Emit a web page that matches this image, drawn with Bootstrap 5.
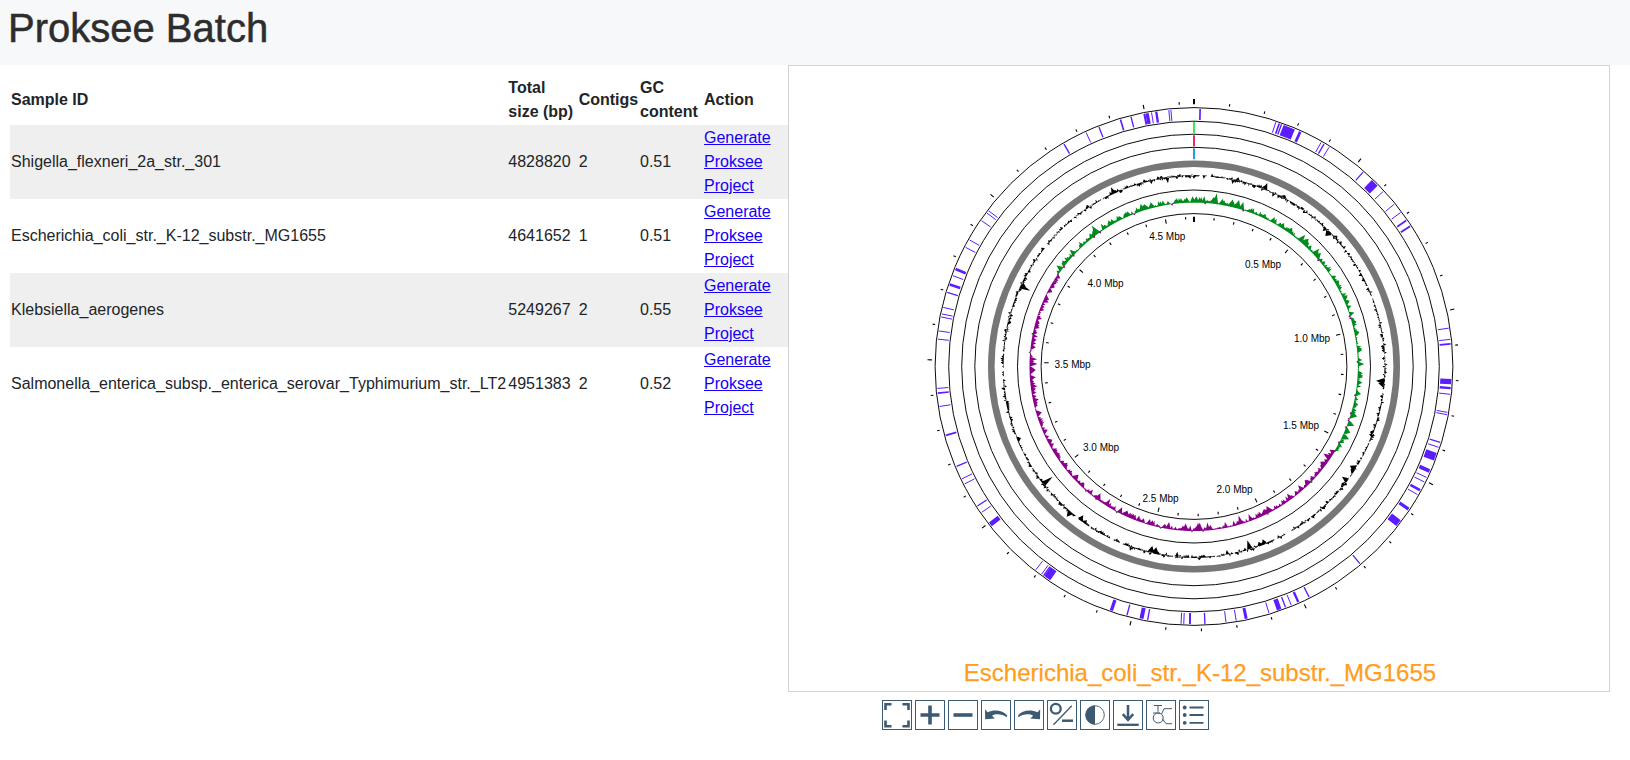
<!DOCTYPE html>
<html lang="en">
<head>
<meta charset="utf-8">
<title>Proksee Batch</title>
<link rel="stylesheet" href="https://cdn.jsdelivr.net/npm/bootstrap@5.3.0/dist/css/bootstrap.min.css">
<style>
body{font-family:"Liberation Sans",Arial,sans-serif;font-size:16px;line-height:1.5;color:#212529;overflow:hidden}
.page-head{height:65px;background:#f7f8fa;padding:4px 8px}
.page-head h1{font-size:40px;font-weight:400;color:#2d2d2d;-webkit-text-stroke:.5px #2d2d2d}
.sample-pane{width:788px;padding:10px 0 0 10px}
.samples{width:778px;table-layout:fixed;border-collapse:collapse}
.samples th,.samples td{padding:1px;vertical-align:middle}
.samples th:first-child,.samples td:first-child{white-space:nowrap}
.samples tbody tr:nth-child(odd){background:#efefef}
.samples a{color:#1400f5}
.map-box{width:822px;height:627px;border:1px solid #d3d3d3}
.tools{gap:3px;padding:8px 0 0 94px}
.tool{width:30px;height:30px;padding:0;border:1px solid #3d5a73;border-radius:0;background:#fff;color:#3d5a73;line-height:0}
.tool svg{display:block;width:28px;height:28px}
</style>
</head>
<body>
<header class="page-head"><h1 class="m-0">Proksee Batch</h1></header>
<main class="d-flex align-items-start">
  <section class="sample-pane flex-shrink-0">
    <table class="samples">
      <colgroup><col style="width:497.3px"><col style="width:70.4px"><col style="width:61.3px"><col style="width:64px"><col></colgroup>
      <thead><tr><th>Sample ID</th><th>Total size (bp)</th><th>Contigs</th><th>GC content</th><th>Action</th></tr></thead>
      <tbody>
        <tr><td>Shigella_flexneri_2a_str._301</td><td>4828820</td><td>2</td><td>0.51</td><td><a href="#">Generate Proksee Project</a></td></tr>
        <tr><td>Escherichia_coli_str._K-12_substr._MG1655</td><td>4641652</td><td>1</td><td>0.51</td><td><a href="#">Generate Proksee Project</a></td></tr>
        <tr><td>Klebsiella_aerogenes</td><td>5249267</td><td>2</td><td>0.55</td><td><a href="#">Generate Proksee Project</a></td></tr>
        <tr><td>Salmonella_enterica_subsp._enterica_serovar_Typhimurium_str._LT2</td><td>4951383</td><td>2</td><td>0.52</td><td><a href="#">Generate Proksee Project</a></td></tr>
      </tbody>
    </table>
  </section>
  <section class="flex-shrink-0">
    <div class="map-box"><svg id="map" class="d-block" width="820" height="625" viewBox="0 0 820 625" font-family="Liberation Sans, Arial, sans-serif"></svg></div>
    <div class="tools d-flex">
      <button class="tool btn" aria-label="Fit"><svg viewBox="0 0 28 28" fill="none" stroke="currentColor" stroke-width="2.6"><path d="M2.500 9V3.300H8.500M19.500 3.300H25.500V9M25.500 19.500V25.200H19.500M8.500 25.200H2.500V19.500"/></svg></button>
      <button class="tool btn" aria-label="Zoom in"><svg viewBox="0 0 28 28" fill="none" stroke="currentColor" stroke-width="3.600"><path d="M4.500 14H23.500M14 4.500V23.500"/></svg></button>
      <button class="tool btn" aria-label="Zoom out"><svg viewBox="0 0 28 28" fill="none" stroke="currentColor" stroke-width="3.600"><path d="M4.500 14H23.500"/></svg></button>
      <button class="tool btn" aria-label="Rotate left"><svg viewBox="0 0 28 28" fill="currentColor"><path d="M3 8.200L5.600 11.200C12 8.300 21 9 25.200 14.500L24.600 16.200C20 13 14 12.500 10 14.700L13 17.500L3.200 18.200Z"/></svg></button>
      <button class="tool btn" aria-label="Rotate right"><svg viewBox="0 0 28 28" fill="currentColor"><path d="M25.200 8.200L22.600 11.200C16 8.300 7 9 3 14.500L3.600 16.200C8 13 14 12.500 18.200 14.700L15.200 17.500L25 18.200Z"/></svg></button>
      <button class="tool btn" aria-label="Circular or linear"><svg viewBox="0 0 28 28" fill="none" stroke="currentColor"><circle cx="7.800" cy="7.700" r="4.900" stroke-width="2.300"/><path d="M5.500 23.800L23.800 4.800" stroke-width="1.300"/><path d="M14 19.700H25" stroke-width="2.500"/></svg></button>
      <button class="tool btn" aria-label="Invert colors"><svg viewBox="0 0 28 28"><circle cx="14" cy="14" r="9.300" fill="none" stroke="currentColor" stroke-width=".9"/><path d="M14 4.500A9.500 9.500 0 0 0 14 23.500Z" fill="currentColor"/></svg></button>
      <button class="tool btn" aria-label="Download"><svg viewBox="0 0 28 28" fill="none" stroke="currentColor"><path d="M14 4V19M8.800 13.200L14 19L19.200 13.200" stroke-width="2.500"/><path d="M3.300 23.800H24.700" stroke-width="2.300"/></svg></button>
      <button class="tool btn" aria-label="Labels"><svg viewBox="0 0 28 28" fill="none" stroke="currentColor" stroke-width="1"><circle cx="11.200" cy="17" r="5"/><path d="M7 4.500H15M11 4.500V10.800M6 12H13M17 7.700H25M17 7.700L14.600 13M15.500 18L19 22.700H25"/></svg></button>
      <button class="tool btn" aria-label="Legend"><svg viewBox="0 0 28 28" stroke="currentColor" fill="currentColor"><g stroke="none"><circle cx="4.700" cy="6.500" r="1.900"/><circle cx="4.700" cy="14" r="1.900"/><circle cx="4.700" cy="21.800" r="1.900"/></g><path d="M9.500 6.500H23.500M9.500 14H23.500M9.500 21.800H23.500" stroke-width="1.800"/></svg></button>
    </div>
  </section>
</main>
<script>
const GENOME = 4641652, CX = 405, CY = 300.5, TAU = Math.PI * 2;
const at = (a, r) => (CX + r * Math.sin(a)).toFixed(2) + ' ' + (CY - r * Math.cos(a)).toFixed(2);
const out = [];
const ring = (r, w, c) => out.push(`<circle cx="${CX}" cy="${CY}" r="${r}" fill="none" stroke="${c}" stroke-width="${w}"/>`);
const radial = (a, r1, r2, w, c) => out.push(`<path d="M${at(a, r1)}L${at(a, r2)}" stroke="${c}" stroke-width="${w}"/>`);

[258.9, 245.300, 232.300, 219.200, 176.500, 152.900].forEach(r => ring(r, 1, '#0c0c0c'));
ring(202.700, 6.600, '#777');

// Scale ticks every 100 kbp, longer every 500 kbp
for (let i = 0; i * 1e5 < GENOME; i++) {
  const a = i * 1e5 / GENOME * TAU, big = i % 5 === 0, w = i ? 1.1 : 2, len = i === 0 ? 5.200 : big ? 4.400 : 2.600;
  radial(a, 262.200, 262.200 + len, w, '#000');
  radial(a, 149.800, 149.800 - len, w, '#000');
}

// Feature midpoints by quadrant: third-pixel offsets from ox, oy, then drawn width
const quadrants = {
  ne: {ox: 12, oy: 829.5}, se: {ox: 12, oy: 19.5}, sw: {ox: 822, oy: 19.5}, nw: {ox: 822, oy: 829.5}
};
const polar = (q, x, y) => {
  const dx = (x - quadrants[q].ox) / 3, dy = (y - quadrants[q].oy) / 3;
  return [(Math.atan2(dx, -dy) + TAU) % TAU, Math.hypot(dx, dy)];
};
const features = {
  ne: [[30,73,5],[252,113,3],[262,117,5],[269,118,4],[292,126,36],[324,140,8],[385,172,3],[394,176,4],[409,185,3],[508,259,4],[542,291,24],[567,316,3],[599,354,3],[619,377,3],[635,401,5],[646,418,6],[759,717,3],[763,750,3],[766,763,5]],
  se: [[765,64,16],[764,83,7],[763,101,3],[755,154,3],[755,161,3],[735,242,4],[731,257,3],[719,284,24],[703,326,11],[694,345,3],[687,358,3],[675,382,8],[669,396,3],[642,438,10],[612,479,22],[499,598,4],[350,697,4],[318,711,7],[297,719,3],[280,725,4],[262,733,14],[232,743,3],[165,759,9],[136,766,3],[106,771,3],[44,774,4],[0,775,5]],
  sw: [[67,84,3],[68,98,5],[74,137,3],[92,222,5],[124,313,4],[141,349,3],[147,365,3],[186,429,4],[198,448,3],[224,483,14],[357,617,3],[374,630,3],[380,634,4],[391,641,22],[579,737,10],[625,750,4],[668,759,12],[686,763,4],[784,774,3],[792,774,3],[810,775,5]],
  nw: [[69,749,3],[72,725,3],[79,684,3],[81,675,3],[86,656,3],[97,612,4],[105,589,8],[112,562,3],[121,543,8],[152,480,3],[165,459,3],[199,402,3],[214,379,3],[220,373,3],[440,176,4],[505,142,3],[543,127,4],[606,104,5],[637,96,4],[676,87,6],[684,85,10],[697,82,3],[711,80,7],[748,76,3],[754,75,3]]
};
for (const q in features) for (const [x, y, w] of features[q])
  radial(polar(q, x, y)[0], 246.600, 257.600, w / 3, '#5b1cff');
radial(0, 233.400, 244.400, 1.8, '#2fe648');
radial(0, 220.300, 231.300, 1.8, '#ee1058');
radial(0, 207.200, 218.200, 1.8, '#1a90cc');

// Filled plots: a small-scale profile plus the named peaks (tip coordinates, base width in degrees)
let seed = 29;
const rnd = () => (seed = (seed * 16807) % 2147483647) / 2147483647;
const deg = Math.PI / 180;
const spike = (a, base, tip, w) => `M${at(a - w * deg / 2, base)}L${at(a, tip)}L${at(a + w * deg / 2, base)}Z`;
const fill = (d, c) => out.push(`<path d="${d}" fill="${c}"/>`);

let gc = '';
for (let d = 0; d < 360; d += .6) {
  const h = (rnd() - .5) * 5.400, s = Math.sign(h);
  if (rnd() > .14) gc += spike(d * deg, 190.900 - s * .5, 190.900 + h + s * .4, .6 + rnd() * .9);
}
const gcPeaks = {
  ne: [[127,282,1],[145,262,1.2],[190,293,1],[226,286,1.4],[232,279,1.2],[240,308,1],[247,320,.9],[285,315,2],[380,387,1],[400,414,2],[406,438,2],[398,424,1],[413,432,1],[442,437,1.4],[490,515,1.4],[540,606,1],[575,780,1.4],[572,770,1]],
  se: [[558,62,1.6],[565,70,2],[572,120,1],[540,215,1.6],[537,222,1],[480,317,2],[482,327,2],[456,350,1.4],[455,370,2.4],[376,465,1.4],[345,480,1],[172,541,1.4],[178,556,1.4],[218,538,1.4],[206,545,1.400],[110,570,1],[28,601,1.2]],
  sw: [[398,350,1.3],[369,370,1.8],[418,425,1],[440,470,1.6],[490,466,1.4],[500,480,1.2],[697,558,1.8],[709,562,1.8],[772,575,1],[630,572,1],[303,234,1.5],[297,243,1.2],[279,178,1.3],[263,156,1]],
  nw: [[573,292,1.2],[582,300,1.4],[606,307,1.2],[331,602,1.2],[318,592,1.8],[305,600,2],[723,257,1.3],[744,280,1],[771,268,1],[695,282,1],[274,698,1.5],[275,686,1],[265,713,1.2],[252,720,1.4],[262,745,1],[500,347,1.600],[465,378,1.6]]
};
for (const q in gcPeaks) for (const [x, y, w] of gcPeaks[q]) { const [a, r] = polar(q, x, y); gc += spike(a, 190.900, r, w * 1.25); }
fill(gc, '#000');

const BASE = 164.2, SWITCH_A = 121, SWITCH_B = 304;
let plus = '', minus = '';
for (let d = 0; d < 360; d += .65) {
  const negative = d > SWITCH_A && d < SWITCH_B, r = rnd();
  const h = .8 + Math.pow(r, 1.6) * 5, w = 1 + rnd() * 1.2;
  if (r > .95) { if (negative) plus += spike(d * deg, BASE, BASE + 1.9, 1); else minus += spike(d * deg, BASE, BASE - 1.9, 1); }
  else if (negative) minus += spike(d * deg, BASE + .3, BASE - h, w);
  else plus += spike(d * deg, BASE - .3, BASE + h, w);
}
const skewUp = {
  ne: [[20,320,1],[43,319,1],[80,311,1.3],[72,322,2],[98,328,1.6],[128,330,1.8],[147,331,1.8],[160,337,1.4],[225,373,1.5],[254,382,1.2],[282,400,1.5],[306,414,1.7],[345,435,1.4],[355,447,2.4],[388,477,1.2],[392,490,1.8],[437,558,1.5],[446,572,1.8],[473,617,1.2],[478,633,1.8],[492,668,1.2],[498,695,2.2],[507,727,1.4],[515,778,1],[521,823,1]],
  se: [[521,12,1.2],[518,48,1.6],[512,102,1.5],[504,135,1.4],[500,169,2],[492,197,1.4],[480,218,2],[476,237,1.8],[462,248,1.2],[456,261,1]],
  nw: [[410,527,1.3],[427,513,1.4],[450,480,1.3],[458,484,1.5],[516,408,1.5],[519,422,3],[543,402,1],[573,388,1.2],[617,367,1.6],[662,343,1.6],[673,344,2],[692,338,1.6],[728,333,1],[770,325,1],[800,323,1.4],[818,320,1.3]]
};
const skewDown = {
  se: [[401,281,1.5],[392,306,2.4],[378,336,1.4],[345,361,2],[325,377,1.3],[292,402,1.4],[230,439,1.600],[222,449,3],[146,468,1.2],[149,480,2.4],[176,463,1],[105,487,1],[52,488,1],[29,489,1.3],[22,497,2.2]],
  sw: [[351,12,1.3],[346,52,1.4],[346,30,2.2],[352,78,1],[355,118,1.4],[352,128,2],[364,157,1.8],[382,210,1.5],[396,240,2],[410,266,1.3],[440,315,2],[475,345,1.8],[492,368,1.8],[518,390,1],[542,401,1.2],[570,418,1.2],[565,427,2.2],[606,443,1.3],[622,453,2.2],[658,468,1],[690,478,1.2],[747,487,1.3],[797,492,1.5],[834,489,1.2]],
  nw: [[420,565,1.3],[403,592,1.8],[396,606,1.5],[386,629,1.800],[373,652,1],[358,683,1.5],[358,700,1.6],[352,713,1.4],[347,750,1.3],[346,772,1.5],[350,808,1.2]]
};
for (const q in skewUp) for (const [x, y, w] of skewUp[q]) { const [a, r] = polar(q, x, y); plus += spike(a, BASE, r + .4, w * 1.5); }
for (const q in skewDown) for (const [x, y, w] of skewDown[q]) { const [a, r] = polar(q, x, y); minus += spike(a, BASE, r - .4, w * 1.5); }
fill(plus, '#008c1c');
fill(minus, '#8b008b');

[['0.5',456,202.300],['1.0',505,276],['1.5',494,363],['2.0',427.500,427],['2.5',353.500,435.700],['3.0',294,385],['3.5',265.500,302],['4.0',298.500,220.700],['4.5',360.200,173.800]]
  .forEach(([t, x, y]) => out.push(`<text x="${x}" y="${y}" font-size="10" fill="#000">${t} Mbp</text>`));
out.push('<text x="411" y="615" font-size="24" text-anchor="middle" fill="#ff9d1e" stroke="#ff9d1e" stroke-width=".25">Escherichia_coli_str._K-12_substr._MG1655</text>');
document.getElementById('map').innerHTML = out.join('');
</script>
<script src="https://cdn.jsdelivr.net/npm/bootstrap@5.3.0/dist/js/bootstrap.bundle.min.js"></script>
</body>
</html>
